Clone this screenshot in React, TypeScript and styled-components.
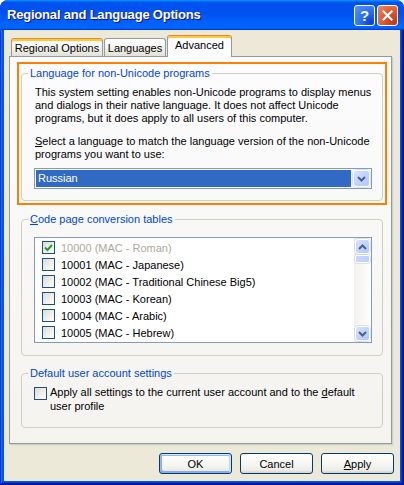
import React from 'react';
import styled, { createGlobalStyle, css } from 'styled-components';

const Global = createGlobalStyle`
  html, body { margin: 0; padding: 0; background: #ffffff; }
  body { font-family: "Liberation Sans", Arial, sans-serif; font-size: 11px; color: #000; }
  #root { width: 404px; height: 485px; }
  * { box-sizing: border-box; }
`;

const UI_FONT = `"Liberation Sans", Arial, sans-serif`;

const Window = styled.div`
  width: 404px;
  height: 485px;
  display: flex;
  flex-direction: column;
  border-radius: 8px 8px 0 0;
  overflow: hidden;
  background: #0831d9;
`;

const TitleBar = styled.div`
  height: 30px;
  flex: none;
  display: flex;
  align-items: center;
  padding: 0 6px 0 7px;
  gap: 2px;
  background: linear-gradient(180deg, #0997ff 0%, #0053ee 8%, #0050ee 40%, #0066ff 88%, #0066ff 93%, #005bff 95%, #003dd7 96%, #003dd7 100%);
`;

const TitleText = styled.div`
  flex: 1;
  color: #ffffff;
  font: bold 13px ${UI_FONT};
  letter-spacing: -0.2px;
  text-shadow: 1px 1px #0f1089;
  padding-bottom: 1px;
`;

const CaptionButton = styled.div<{ $kind: 'help' | 'close' }>`
  width: 21px;
  height: 21px;
  border: 1px solid #ffffff;
  border-radius: 3px;
  display: flex;
  align-items: center;
  justify-content: center;
  color: #fff;
  font: bold 15px ${UI_FONT};
  ${p => p.$kind === 'help'
    ? css`background: radial-gradient(circle at 85% 85%, #0a3fd8 0%, #2c6ef0 45%, #5a95f7 100%);`
    : css`background: radial-gradient(circle at 85% 85%, #c0391a 0%, #e0582c 50%, #ef8a66 100%);`}
`;

const Frame = styled.div`
  flex: 1;
  display: flex;
  flex-direction: column;
  padding: 0 4px 4px;
  background: #0855dd;
  box-shadow: inset -1px -1px #00138c, inset 1px 0 #0831d9, inset -2px -2px #001ea0, inset 2px 0 #166aee, inset -3px -3px #003bda, inset 3px 0 #0855dd;
`;

const Body = styled.div`
  flex: 1;
  display: flex;
  flex-direction: column;
  background: #ece9d8;
  padding: 5px 6px 0 5px;
`;

const TabRow = styled.div`
  height: 21px;
  display: flex;
  align-items: flex-end;
  gap: 1px;
  padding-left: 2px;
`;

const Tab = styled.div<{ $active?: boolean; $hot?: boolean; $w: number }>`
  width: ${p => p.$w}px;
  height: 18px;
  flex: none;
  display: flex;
  align-items: center;
  justify-content: center;
  white-space: nowrap;
  font: 11px ${UI_FONT};
  border: 1px solid #919b9c;
  border-bottom: none;
  border-radius: 3px 3px 0 0;
  background: linear-gradient(180deg, #ffffff 0%, #f3f3ef 50%, #e3e1d8 100%);
  ${p => p.$hot && css`
    border-top-color: #e68b2c;
    box-shadow: inset 0 2px #ffc73c;
    padding-top: 1px;
  `}
  ${p => p.$active && css`
    height: 22px;
    margin-bottom: -1px;
    padding-bottom: 3px;
    position: relative;
    z-index: 1;
    background: #fcfcfe;
    border-top-color: #e68b2c;
    box-shadow: inset 0 2px #ffc73c;
  `}
`;

const Panel = styled.div`
  height: 388px;
  margin-right: 2px;
  flex: none;
  border: 1px solid #919b9c;
  background: linear-gradient(180deg, #fcfcfe 0%, #f4f3ee 100%);
  box-shadow: 1px 1px #d0cfc7, 2px 2px #e4e2d6;
  padding: 5px 4px 0 7px;
  display: flex;
  flex-direction: column;
`;

const Highlight = styled.div`
  border: 2px solid #ff8000;
  padding: 3px 2px 2px 2px;
`;

const Group = styled.fieldset<{ $gapTop?: number; $side?: number }>`
  margin: ${p => p.$gapTop ?? 0}px ${p => p.$side ?? 0}px 0;
  padding: 0;
  min-width: 0;
  border: 1px solid #d0d0bf;
  border-radius: 4px;
`;

const Legend = styled.legend`
  margin-left: 6px;
  padding: 0 2px;
  color: #0046d5;
  font: 11px ${UI_FONT};
  line-height: 13px;
`;

const GroupBody = styled.div<{ $pad: string }>`
  padding: ${p => p.$pad};
  display: flex;
  flex-direction: column;
`;

const Para = styled.p<{ $after?: number }>`
  margin: 0 0 ${p => p.$after ?? 0}px;
  padding-left: 1px;
  font: 11px ${UI_FONT};
  line-height: 13px;
  white-space: nowrap;
`;

const Select = styled.div`
  height: 21px;
  border: 1px solid #7f9db9;
  background: #ffffff;
  padding: 1px;
  display: flex;
  gap: 2px;
`;

const SelectValue = styled.div`
  flex: 1;
  background: #316ac5;
  color: #ffffff;
  font: 11px ${UI_FONT};
  line-height: 17px;
  padding-left: 2px;
`;

const ArrowButton = styled.div<{ $w?: number; $h?: number }>`
  width: ${p => p.$w ?? 15}px;
  height: ${p => p.$h ?? 15}px;
  flex: none;
  border: 1px solid #ffffff;
  border-radius: 3px;
  background: linear-gradient(135deg, #d8e4fd 0%, #c2d4fb 50%, #b4c8f6 100%);
  box-shadow: 0 0 0 0.5px #b6c8f0;
  display: flex;
  align-items: center;
  justify-content: center;
`;

const ListBox = styled.div`
  height: 106px;
  border: 1px solid #7f9db9;
  background: #ffffff;
  display: flex;
`;

const Rows = styled.div`
  flex: 1;
  padding: 1px 0;
  display: flex;
  flex-direction: column;
`;

const Row = styled.div<{ $disabled?: boolean }>`
  height: 17px;
  display: flex;
  align-items: center;
  gap: 6px;
  padding-left: 7px;
  font: 11px ${UI_FONT};
  color: ${p => (p.$disabled ? '#aca899' : '#000000')};
  white-space: nowrap;
`;

const Box = styled.div<{ $top?: number }>`
  width: 13px;
  height: 13px;
  flex: none;
  margin-top: ${p => p.$top ?? 0}px;
  border: 1px solid #1c5180;
  background: linear-gradient(135deg, #dcdcd7 0%, #f4f4f0 70%, #ffffff 100%);
  display: flex;
  align-items: center;
  justify-content: center;
`;

const ScrollBar = styled.div`
  width: 17px;
  flex: none;
  padding: 1px;
  display: flex;
  flex-direction: column;
  gap: 1px;
  background: linear-gradient(90deg, #f3f1ec 0%, #fefefb 100%);
`;

const Thumb = styled.div`
  height: 8px;
  border: 1px solid #ffffff;
  border-radius: 2px;
  background: linear-gradient(90deg, #c8d7fc 0%, #bccdf8 100%);
  box-shadow: 0 0 0 0.5px #b6c8f0;
`;

const Track = styled.div`
  flex: 1;
`;

const OptionRow = styled.div`
  display: flex;
  align-items: flex-start;
  gap: 3px;
`;

const OptionText = styled.div`
  font: 11px ${UI_FONT};
  line-height: 14px;
  white-space: nowrap;
`;

const ButtonRow = styled.div`
  margin-top: 9px;
  display: flex;
  justify-content: flex-end;
  gap: 8px;
`;

const Btn = styled.button<{ $default?: boolean }>`
  width: 73px;
  height: 21px;
  padding: 0;
  border: 1px solid #003c74;
  border-radius: 3px;
  background: linear-gradient(180deg, #ffffff 0%, #f4f4f0 60%, #ecebe6 86%, #d6d0c5 100%);
  font: 11px ${UI_FONT};
  color: #000;
  ${p => p.$default && css`
    box-shadow: inset -1px 1px #cee7ff, inset 1px 2px #98b8ea, inset -2px 2px #bcd4f6, inset 1px -1px #89ade4, inset 2px -2px #89ade4;
  `}
`;

const Chevron = ({ dir }: { dir: 'up' | 'down' }) => (
  <svg width="9" height="6" viewBox="0 0 9 6">
    <polyline
      points={dir === 'up' ? '1,5 4.5,1.5 8,5' : '1,1 4.5,4.5 8,1'}
      fill="none"
      stroke="#4d6185"
      strokeWidth="2"
    />
  </svg>
);

const Check = () => (
  <svg width="9" height="9" viewBox="0 0 9 9">
    <polyline points="1,4.5 3.5,7 8,2" fill="none" stroke="#21a121" strokeWidth="2" />
  </svg>
);

const CloseGlyph = () => (
  <svg width="11" height="11" viewBox="0 0 11 11">
    <path d="M1.5 1.5 L9.5 9.5 M9.5 1.5 L1.5 9.5" stroke="#ffffff" strokeWidth="2.2" strokeLinecap="square" />
  </svg>
);

const items = [
  '10000 (MAC - Roman)',
  '10001 (MAC - Japanese)',
  '10002 (MAC - Traditional Chinese Big5)',
  '10003 (MAC - Korean)',
  '10004 (MAC - Arabic)',
  '10005 (MAC - Hebrew)',
];

export default function App() {
  return (
    <>
      <Global />
      <Window>
        <TitleBar>
          <TitleText>Regional and Language Options</TitleText>
          <CaptionButton $kind="help">?</CaptionButton>
          <CaptionButton $kind="close"><CloseGlyph /></CaptionButton>
        </TitleBar>
        <Frame>
          <Body>
            <TabRow>
              <Tab $hot $w={92}>Regional Options</Tab>
              <Tab $w={62}>Languages</Tab>
              <Tab $active $w={65}>Advanced</Tab>
            </TabRow>
            <Panel>
              <Highlight>
                <Group>
                  <Legend>Language for non-Unicode programs</Legend>
                  <GroupBody $pad="6px 10px 11px 12px">
                    <Para $after={10}>
                      This system setting enables non-Unicode programs to display menus<br />
                      and dialogs in their native language. It does not affect Unicode<br />
                      programs, but it does apply to all users of this computer.
                    </Para>
                    <Para $after={7}>
                      <u>S</u>elect a language to match the language version of the non-Unicode<br />
                      programs you want to use:
                    </Para>
                    <Select>
                      <SelectValue>Russian</SelectValue>
                      <ArrowButton $w={17} $h={17}><Chevron dir="down" /></ArrowButton>
                    </Select>
                  </GroupBody>
                </Group>
              </Highlight>
              <Group $gapTop={8} $side={4}>
                <Legend><u>C</u>ode page conversion tables</Legend>
                <GroupBody $pad="11px 10px 12px 12px">
                  <ListBox>
                    <Rows>
                      {items.map((t, i) => (
                        <Row key={t} $disabled={i === 0}>
                          <Box>{i === 0 && <Check />}</Box>
                          {t}
                        </Row>
                      ))}
                    </Rows>
                    <ScrollBar>
                      <ArrowButton><Chevron dir="up" /></ArrowButton>
                      <Thumb />
                      <Track />
                      <ArrowButton><Chevron dir="down" /></ArrowButton>
                    </ScrollBar>
                  </ListBox>
                </GroupBody>
              </Group>
              <Group $gapTop={11} $side={4}>
                <Legend>Default user account settings</Legend>
                <GroupBody $pad="5px 10px 14px 12px">
                  <OptionRow>
                    <Box $top={2} />
                    <OptionText>
                      Apply all settings to the current user account and to the <u>d</u>efault<br />
                      user profile
                    </OptionText>
                  </OptionRow>
                </GroupBody>
              </Group>
            </Panel>
            <ButtonRow>
              <Btn $default>OK</Btn>
              <Btn>Cancel</Btn>
              <Btn><u>A</u>pply</Btn>
            </ButtonRow>
          </Body>
        </Frame>
      </Window>
    </>
  );
}
